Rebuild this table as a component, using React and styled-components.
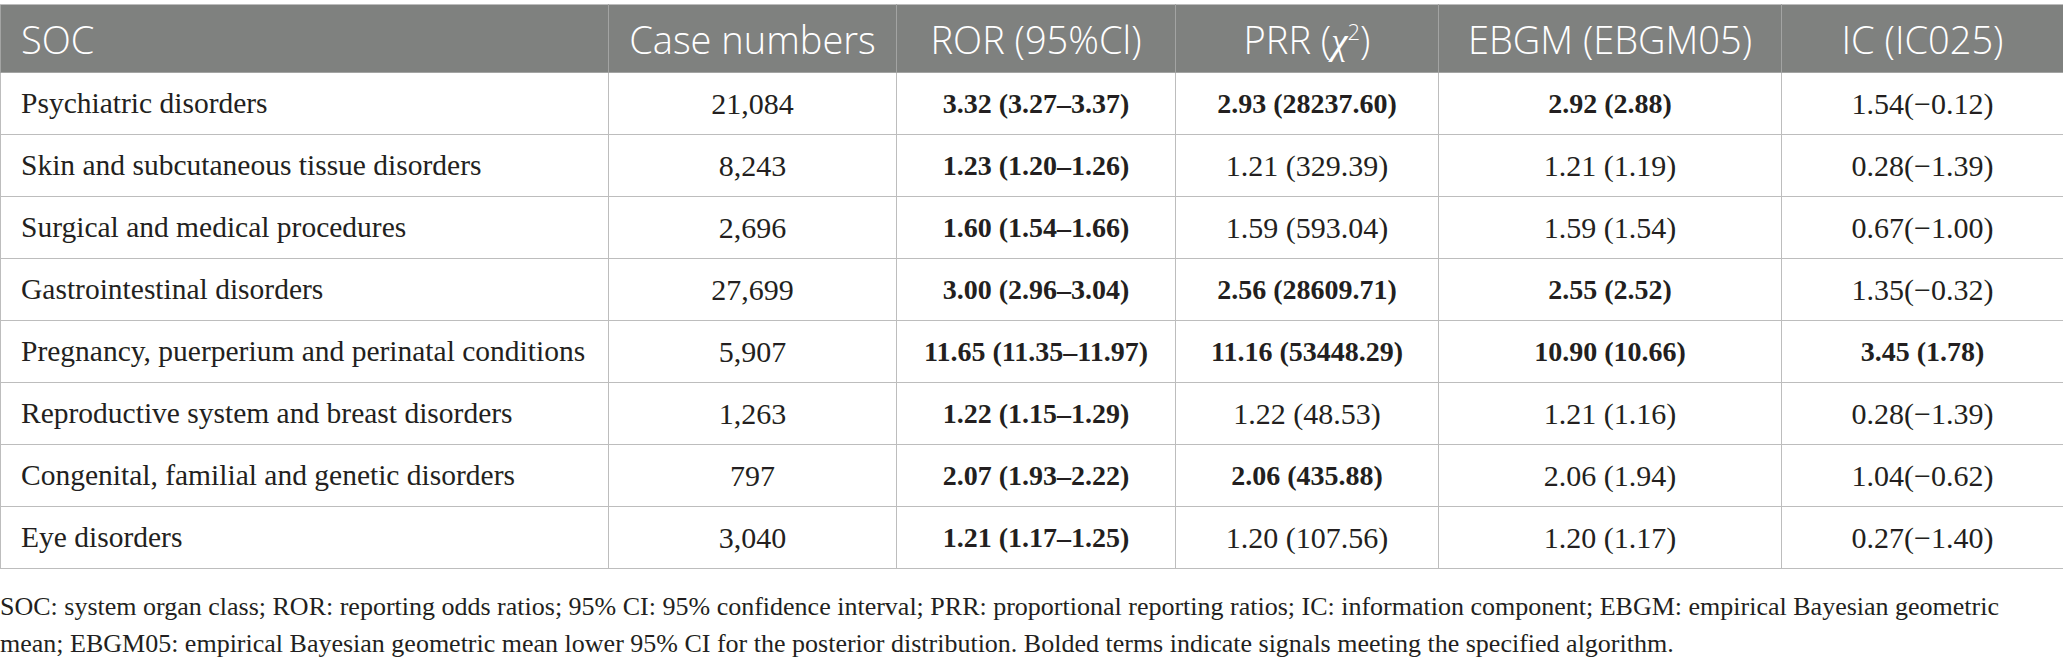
import React from 'react'
import styled, {createGlobalStyle} from 'styled-components'

const GlobalStyle = createGlobalStyle`
  html, body {
    margin: 0;
    padding: 0;
    background: #ffffff;
  }
`

const Page = styled.div`
  width: 2063px;
  padding-top: 4px;
  font-family: "Liberation Serif", "Times New Roman", serif;
  color: #231f20;
`

const Table = styled.table`
  width: 2063px;
  table-layout: fixed;
  border-collapse: collapse;
  border: 1px solid #bdbdbd;
`

const HeadRow = styled.tr`
  height: 68px;
  background: #7f817f;
`

const HeadCell = styled.th`
  padding: 0 20px;
  border: 1px solid #a3a4a3;
  border-top-color: #bdbdbd;
  font-family: "Open Sans", "Noto Sans", sans-serif;
  font-size: 38px;
  font-weight: 300;
  color: #ffffff;
  text-align: ${p => (p.$left ? 'left' : 'center')};
  white-space: nowrap;
`

const Chi = styled.i`
  font-family: "Liberation Serif", serif;
  font-size: 37px;
`

const Sup = styled.sup`
  font-size: 22px;
`

const Row = styled.tr`
  height: 62px;
`

const Cell = styled.td`
  padding: 0 20px;
  border: 1px solid #bdbdbd;
  font-size: ${p => (p.$bold ? '28px' : '30px')};
  font-weight: ${p => (p.$bold ? 700 : 400)};
  text-align: ${p => (p.$left ? 'left' : 'center')};
  white-space: nowrap;
`

const SocCell = styled(Cell)`
  font-size: 29.5px;
`

const Footnote = styled.p`
  margin: 0;
  padding: 19px 0 0 0;
  width: 2035px;
  font-size: 26px;
  line-height: 37px;
  color: #231f20;
`

const columns = [608, 288, 279, 263, 343, 282]

// b = which of the stat columns are bold (ror, prr, ebgm, ic)
const rows = [
  {soc: 'Psychiatric disorders', n: '21,084', ror: '3.32 (3.27–3.37)', prr: '2.93 (28237.60)', ebgm: '2.92 (2.88)', ic: '1.54(−0.12)', b: [1, 1, 1, 0]},
  {soc: 'Skin and subcutaneous tissue disorders', n: '8,243', ror: '1.23 (1.20–1.26)', prr: '1.21 (329.39)', ebgm: '1.21 (1.19)', ic: '0.28(−1.39)', b: [1, 0, 0, 0]},
  {soc: 'Surgical and medical procedures', n: '2,696', ror: '1.60 (1.54–1.66)', prr: '1.59 (593.04)', ebgm: '1.59 (1.54)', ic: '0.67(−1.00)', b: [1, 0, 0, 0]},
  {soc: 'Gastrointestinal disorders', n: '27,699', ror: '3.00 (2.96–3.04)', prr: '2.56 (28609.71)', ebgm: '2.55 (2.52)', ic: '1.35(−0.32)', b: [1, 1, 1, 0]},
  {soc: 'Pregnancy, puerperium and perinatal conditions', n: '5,907', ror: '11.65 (11.35–11.97)', prr: '11.16 (53448.29)', ebgm: '10.90 (10.66)', ic: '3.45 (1.78)', b: [1, 1, 1, 1]},
  {soc: 'Reproductive system and breast disorders', n: '1,263', ror: '1.22 (1.15–1.29)', prr: '1.22 (48.53)', ebgm: '1.21 (1.16)', ic: '0.28(−1.39)', b: [1, 0, 0, 0]},
  {soc: 'Congenital, familial and genetic disorders', n: '797', ror: '2.07 (1.93–2.22)', prr: '2.06 (435.88)', ebgm: '2.06 (1.94)', ic: '1.04(−0.62)', b: [1, 1, 0, 0]},
  {soc: 'Eye disorders', n: '3,040', ror: '1.21 (1.17–1.25)', prr: '1.20 (107.56)', ebgm: '1.20 (1.17)', ic: '0.27(−1.40)', b: [1, 0, 0, 0]},
]

export default function App() {
  return (
    <Page>
      <GlobalStyle />
      <Table>
        <colgroup>
          {columns.map((w, i) => <col key={i} style={{width: w}} />)}
        </colgroup>
        <thead>
          <HeadRow>
            <HeadCell $left>SOC</HeadCell>
            <HeadCell>Case numbers</HeadCell>
            <HeadCell>ROR (95%Cl)</HeadCell>
            <HeadCell>PRR (<Chi>χ</Chi><Sup>2</Sup>)</HeadCell>
            <HeadCell>EBGM (EBGM05)</HeadCell>
            <HeadCell>IC (IC025)</HeadCell>
          </HeadRow>
        </thead>
        <tbody>
          {rows.map((r, idx) => (
            <Row key={idx}>
              <SocCell $left>{r.soc}</SocCell>
              <Cell>{r.n}</Cell>
              <Cell $bold={r.b[0]}>{r.ror}</Cell>
              <Cell $bold={r.b[1]}>{r.prr}</Cell>
              <Cell $bold={r.b[2]}>{r.ebgm}</Cell>
              <Cell $bold={r.b[3]}>{r.ic}</Cell>
            </Row>
          ))}
        </tbody>
      </Table>
      <Footnote>
        SOC: system organ class; ROR: reporting odds ratios; 95% CI: 95% confidence interval; PRR: proportional reporting ratios; IC: information component; EBGM: empirical Bayesian geometric mean; EBGM05: empirical Bayesian geometric mean lower 95% CI for the posterior distribution. Bolded terms indicate signals meeting the specified algorithm.
      </Footnote>
    </Page>
  )
}
